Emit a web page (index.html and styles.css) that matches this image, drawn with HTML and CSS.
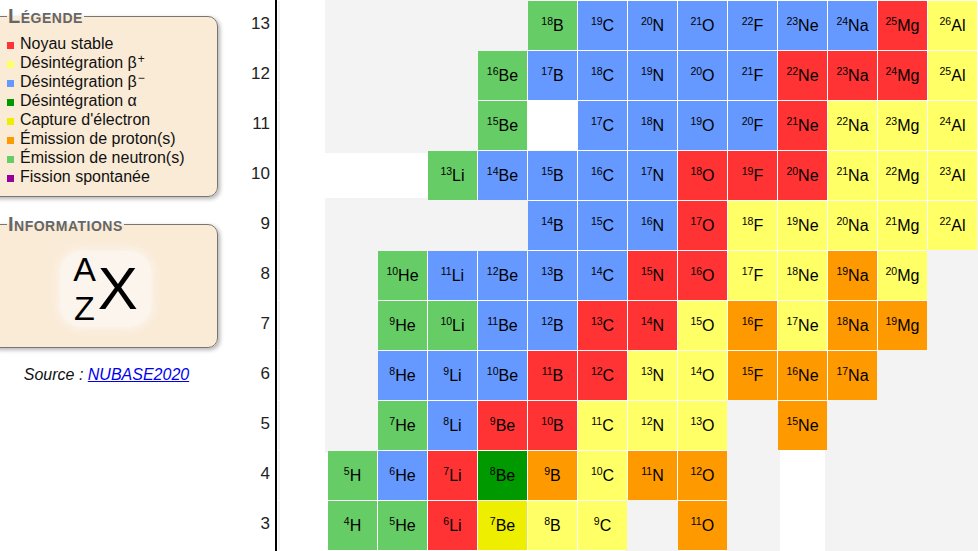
FILE: index.html
```html
<!DOCTYPE html>
<html lang="fr">
<head>
<meta charset="utf-8">
<title>Carte des nucléides</title>
<link rel="stylesheet" href="styles.css">
</head>
<body>
<div class="page">
  <aside class="side">
    <fieldset class="box legend-box">
      <legend>Légende</legend>
      <ul class="keys">
        <li><span class="sw stable"></span>Noyau stable</li>
        <li><span class="sw bplus"></span>Désintégration β<sup class="charge">+</sup></li>
        <li><span class="sw bminus"></span>Désintégration β<sup class="charge">−</sup></li>
        <li><span class="sw alpha"></span>Désintégration α</li>
        <li><span class="sw ec"></span>Capture d'électron</li>
        <li><span class="sw proton"></span>Émission de proton(s)</li>
        <li><span class="sw neutron"></span>Émission de neutron(s)</li>
        <li><span class="sw sf"></span>Fission spontanée</li>
      </ul>
    </fieldset>
    <fieldset class="box info-box">
      <legend>Informations</legend>
      <div class="sym">
        <span class="az"><span>A</span><span>Z</span></span>
        <span class="x">X</span>
      </div>
    </fieldset>
    <p class="source">Source : <a href="#">NUBASE2020</a></p>
  </aside>

  <div class="chart">
    <div class="axis">
      <div>13</div><div>12</div><div>11</div><div>10</div><div>9</div><div>8</div>
      <div>7</div><div>6</div><div>5</div><div>4</div><div>3</div>
    </div>
    <div class="grid">
      <!-- N = 13 -->
      <div class="blank edge"></div>
      <div class="void"></div><div class="void"></div><div class="void"></div><div class="void"></div>
      <div class="nuc neutron"><sup>18</sup>B</div>
      <div class="nuc bminus"><sup>19</sup>C</div>
      <div class="nuc bminus"><sup>20</sup>N</div>
      <div class="nuc bminus"><sup>21</sup>O</div>
      <div class="nuc bminus"><sup>22</sup>F</div>
      <div class="nuc bminus"><sup>23</sup>Ne</div>
      <div class="nuc bminus"><sup>24</sup>Na</div>
      <div class="nuc stable"><sup>25</sup>Mg</div>
      <div class="nuc bplus"><sup>26</sup>Al</div>
      <div class="blank"></div>
      <!-- N = 12 -->
      <div class="blank edge"></div>
      <div class="void"></div><div class="void"></div><div class="void"></div>
      <div class="nuc neutron"><sup>16</sup>Be</div>
      <div class="nuc bminus"><sup>17</sup>B</div>
      <div class="nuc bminus"><sup>18</sup>C</div>
      <div class="nuc bminus"><sup>19</sup>N</div>
      <div class="nuc bminus"><sup>20</sup>O</div>
      <div class="nuc bminus"><sup>21</sup>F</div>
      <div class="nuc stable"><sup>22</sup>Ne</div>
      <div class="nuc stable"><sup>23</sup>Na</div>
      <div class="nuc stable"><sup>24</sup>Mg</div>
      <div class="nuc bplus"><sup>25</sup>Al</div>
      <div class="blank"></div>
      <!-- N = 11 -->
      <div class="blank edge"></div>
      <div class="void"></div><div class="void"></div><div class="void"></div>
      <div class="nuc neutron"><sup>15</sup>Be</div>
      <div class="blank"></div>
      <div class="nuc bminus"><sup>17</sup>C</div>
      <div class="nuc bminus"><sup>18</sup>N</div>
      <div class="nuc bminus"><sup>19</sup>O</div>
      <div class="nuc bminus"><sup>20</sup>F</div>
      <div class="nuc stable"><sup>21</sup>Ne</div>
      <div class="nuc bplus"><sup>22</sup>Na</div>
      <div class="nuc bplus"><sup>23</sup>Mg</div>
      <div class="nuc bplus"><sup>24</sup>Al</div>
      <div class="blank"></div>
      <!-- N = 10 -->
      <div class="blank"></div><div class="blank"></div><div class="blank"></div>
      <div class="nuc neutron"><sup>13</sup>Li</div>
      <div class="nuc bminus"><sup>14</sup>Be</div>
      <div class="nuc bminus"><sup>15</sup>B</div>
      <div class="nuc bminus"><sup>16</sup>C</div>
      <div class="nuc bminus"><sup>17</sup>N</div>
      <div class="nuc stable"><sup>18</sup>O</div>
      <div class="nuc stable"><sup>19</sup>F</div>
      <div class="nuc stable"><sup>20</sup>Ne</div>
      <div class="nuc bplus"><sup>21</sup>Na</div>
      <div class="nuc bplus"><sup>22</sup>Mg</div>
      <div class="nuc bplus"><sup>23</sup>Al</div>
      <div class="blank"></div>
      <!-- N = 9 -->
      <div class="blank edge"></div>
      <div class="void"></div><div class="void"></div><div class="void"></div><div class="void"></div>
      <div class="nuc bminus"><sup>14</sup>B</div>
      <div class="nuc bminus"><sup>15</sup>C</div>
      <div class="nuc bminus"><sup>16</sup>N</div>
      <div class="nuc stable"><sup>17</sup>O</div>
      <div class="nuc bplus"><sup>18</sup>F</div>
      <div class="nuc bplus"><sup>19</sup>Ne</div>
      <div class="nuc bplus"><sup>20</sup>Na</div>
      <div class="nuc bplus"><sup>21</sup>Mg</div>
      <div class="nuc bplus"><sup>22</sup>Al</div>
      <div class="void"></div>
      <!-- N = 8 -->
      <div class="blank edge"></div>
      <div class="void"></div>
      <div class="nuc neutron"><sup>10</sup>He</div>
      <div class="nuc bminus"><sup>11</sup>Li</div>
      <div class="nuc bminus"><sup>12</sup>Be</div>
      <div class="nuc bminus"><sup>13</sup>B</div>
      <div class="nuc bminus"><sup>14</sup>C</div>
      <div class="nuc stable"><sup>15</sup>N</div>
      <div class="nuc stable"><sup>16</sup>O</div>
      <div class="nuc bplus"><sup>17</sup>F</div>
      <div class="nuc bplus"><sup>18</sup>Ne</div>
      <div class="nuc proton"><sup>19</sup>Na</div>
      <div class="nuc bplus"><sup>20</sup>Mg</div>
      <div class="void"></div><div class="void"></div>
      <!-- N = 7 -->
      <div class="blank edge"></div>
      <div class="void"></div>
      <div class="nuc neutron"><sup>9</sup>He</div>
      <div class="nuc neutron"><sup>10</sup>Li</div>
      <div class="nuc bminus"><sup>11</sup>Be</div>
      <div class="nuc bminus"><sup>12</sup>B</div>
      <div class="nuc stable"><sup>13</sup>C</div>
      <div class="nuc stable"><sup>14</sup>N</div>
      <div class="nuc bplus"><sup>15</sup>O</div>
      <div class="nuc proton"><sup>16</sup>F</div>
      <div class="nuc bplus"><sup>17</sup>Ne</div>
      <div class="nuc proton"><sup>18</sup>Na</div>
      <div class="nuc proton"><sup>19</sup>Mg</div>
      <div class="void"></div><div class="void"></div>
      <!-- N = 6 -->
      <div class="blank edge"></div>
      <div class="void"></div>
      <div class="nuc bminus"><sup>8</sup>He</div>
      <div class="nuc bminus"><sup>9</sup>Li</div>
      <div class="nuc bminus"><sup>10</sup>Be</div>
      <div class="nuc stable"><sup>11</sup>B</div>
      <div class="nuc stable"><sup>12</sup>C</div>
      <div class="nuc bplus"><sup>13</sup>N</div>
      <div class="nuc bplus"><sup>14</sup>O</div>
      <div class="nuc proton"><sup>15</sup>F</div>
      <div class="nuc proton"><sup>16</sup>Ne</div>
      <div class="nuc proton"><sup>17</sup>Na</div>
      <div class="void"></div><div class="void"></div><div class="void"></div>
      <!-- N = 5 -->
      <div class="blank edge"></div>
      <div class="void"></div>
      <div class="nuc neutron"><sup>7</sup>He</div>
      <div class="nuc bminus"><sup>8</sup>Li</div>
      <div class="nuc stable"><sup>9</sup>Be</div>
      <div class="nuc stable"><sup>10</sup>B</div>
      <div class="nuc bplus"><sup>11</sup>C</div>
      <div class="nuc bplus"><sup>12</sup>N</div>
      <div class="nuc bplus"><sup>13</sup>O</div>
      <div class="void"></div>
      <div class="nuc proton"><sup>15</sup>Ne</div>
      <div class="void"></div><div class="void"></div><div class="void"></div><div class="void"></div>
      <!-- N = 4 -->
      <div class="blank edge"></div>
      <div class="nuc neutron"><sup>5</sup>H</div>
      <div class="nuc bminus"><sup>6</sup>He</div>
      <div class="nuc stable"><sup>7</sup>Li</div>
      <div class="nuc alpha"><sup>8</sup>Be</div>
      <div class="nuc proton"><sup>9</sup>B</div>
      <div class="nuc bplus"><sup>10</sup>C</div>
      <div class="nuc proton"><sup>11</sup>N</div>
      <div class="nuc proton"><sup>12</sup>O</div>
      <div class="void"></div>
      <div class="blank"></div>
      <div class="void"></div><div class="void"></div><div class="void"></div><div class="void"></div>
      <!-- N = 3 -->
      <div class="blank edge"></div>
      <div class="nuc neutron"><sup>4</sup>H</div>
      <div class="nuc neutron"><sup>5</sup>He</div>
      <div class="nuc stable"><sup>6</sup>Li</div>
      <div class="nuc ec"><sup>7</sup>Be</div>
      <div class="nuc bplus"><sup>8</sup>B</div>
      <div class="nuc bplus"><sup>9</sup>C</div>
      <div class="void"></div>
      <div class="nuc proton"><sup>11</sup>O</div>
      <div class="void"></div>
      <div class="blank"></div>
      <div class="void"></div><div class="void"></div><div class="void"></div><div class="void"></div>
    </div>
  </div>
</div>
</body>
</html>
```

FILE: styles.css
```css
html, body {
  margin: 0;
  overflow: hidden;
  background: #fff;
}

body {
  font-family: "Liberation Sans", Arial, sans-serif;
  font-size: 16px;
  color: #111;
}

.page {
  display: flex;
  align-items: flex-start;
}

/* ---------- left panel ---------- */
.side {
  flex: none;
  width: 230px;
  margin-left: -12px;
  padding-top: 5px;
}

.box {
  margin: 0;
  min-width: 0;
  border: 1px solid #777;
  border-radius: 10px;
  background: #faebd7;
  box-shadow: 2px 2px 4px rgba(0, 0, 0, 0.3);
}

.box legend {
  padding: 0 1px;
  font-size: 20px;
  font-weight: bold;
  font-variant: small-caps;
  letter-spacing: 0.5px;
  color: #666;
}

.legend-box {
  padding: 6px 10px 10px 18px;
}

.keys {
  list-style: none;
  margin: 0;
  padding: 0;
}

.keys li {
  line-height: 19px;
  white-space: nowrap;
}

.charge {
  font-size: 12px;
  line-height: 0;
  vertical-align: 5px;
  margin-left: 1px;
}

.sw {
  display: inline-block;
  width: 7px;
  height: 7px;
  margin-right: 6px;
}

.stable  { background: #ff3333; }
.bplus   { background: #ffff66; }
.bminus  { background: #6699ff; }
.alpha   { background: #009900; }
.ec      { background: #eeee00; }
.proton  { background: #ff9900; }
.neutron { background: #66cc66; }
.sf      { background: #990099; }

.info-box {
  margin-top: 16px;
  padding: 15px 13px 20px 18px;
}

.sym {
  width: 91px;
  height: 76px;
  margin: 0 auto;
  display: flex;
  align-items: center;
  justify-content: center;
  gap: 2px;
  border-radius: 22px;
  background: #fcf5ed;
  box-shadow: 0 0 8px 2px #fcf5ed;
  color: #000;
}

.az {
  display: flex;
  flex-direction: column;
  text-align: center;
  font-size: 34px;
  line-height: 39px;
}

.x {
  font-size: 60px;
  line-height: 60px;
}

.source {
  margin: 18px 0 0 7px;
  text-align: center;
  font-style: italic;
  color: #111;
}

.source a {
  color: #0000ee;
}

/* ---------- chart ---------- */
.chart {
  flex: none;
  display: flex;
  align-items: flex-start;
}

.axis {
  width: 57px;
  min-height: 600px;
  border-right: 2px solid #000;
}

.axis div {
  height: 50px;
  line-height: 47px;
  padding-right: 5px;
  text-align: right;
  font-size: 17px;
  color: #222;
}

.grid {
  display: grid;
  grid-template-columns: repeat(15, 49px);
  grid-auto-rows: 49px;
  gap: 1px;
  padding: 1px 0 0 1px;
}

.void {
  background: #f3f3f3;
  box-shadow: 0 0 0 3px #f3f3f3;
}

.blank.edge {
  box-shadow: inset 2px 0 0 #f3f3f3;
}

.nuc {
  position: relative;
  line-height: 49px;
  text-align: center;
  font-size: 16px;
  color: #000;
  white-space: nowrap;
}

.nuc sup {
  font-size: 10.5px;
  line-height: 0;
  vertical-align: super;
}
```
